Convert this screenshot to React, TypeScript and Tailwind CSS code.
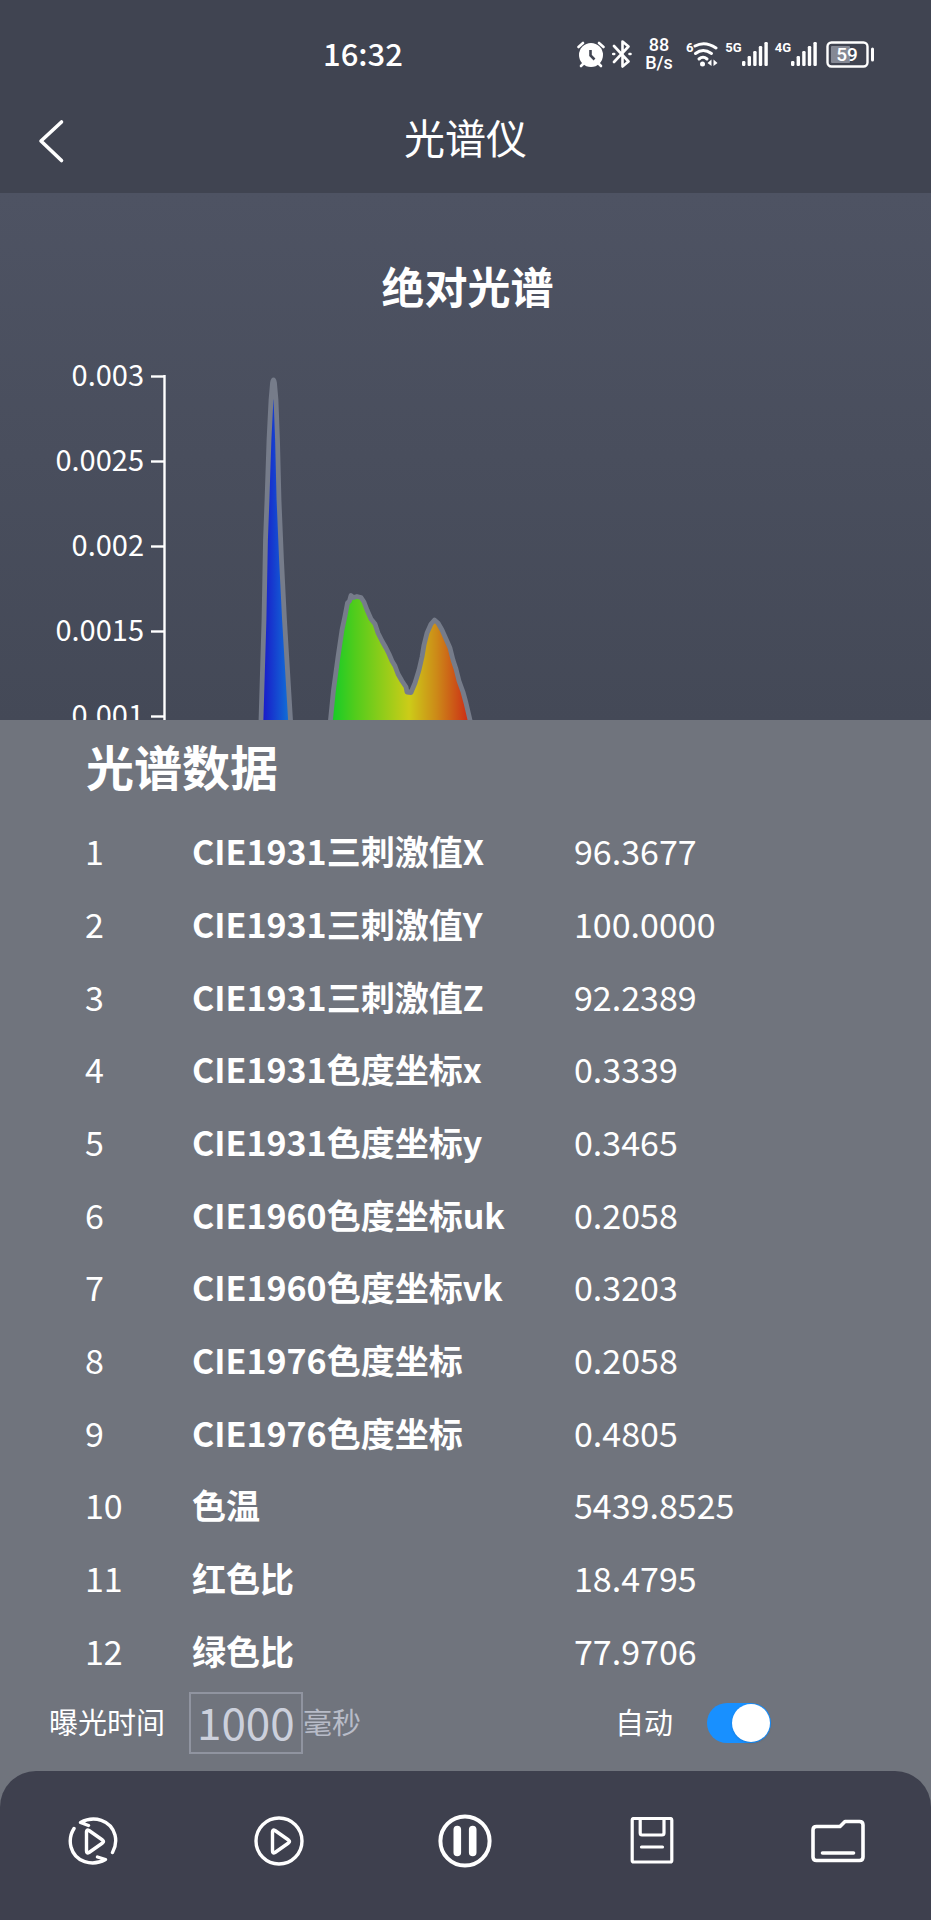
import { useState } from "react";

const rows = [
  { name: "CIE1931三刺激值X", value: "96.3677" },
  { name: "CIE1931三刺激值Y", value: "100.0000" },
  { name: "CIE1931三刺激值Z", value: "92.2389" },
  { name: "CIE1931色度坐标x", value: "0.3339" },
  { name: "CIE1931色度坐标y", value: "0.3465" },
  { name: "CIE1960色度坐标uk", value: "0.2058" },
  { name: "CIE1960色度坐标vk", value: "0.3203" },
  { name: "CIE1976色度坐标", value: "0.2058" },
  { name: "CIE1976色度坐标", value: "0.4805" },
  { name: "色温", value: "5439.8525" },
  { name: "红色比", value: "18.4795" },
  { name: "绿色比", value: "77.9706" },
];

const ticks = [
  { label: "0.003", y: 36 },
  { label: "0.0025", y: 121 },
  { label: "0.002", y: 206 },
  { label: "0.0015", y: 291 },
  { label: "0.001", y: 376 },
];

// Spectrum curve, in the chart's own units
const curve =
  "M259 420 L261 380 L264 280 L265.500 200 L267 160 L269 100 L271 60 L272.500 43 Q273.500 37 274.500 43 L276 60 L277.500 100 L279 160 L281.500 220 L284.500 280 L290.500 380 L293 420 " +
  "L327 420 L330.500 380 L333.500 350 L338 317 L342 290 L345 276 L347.500 263 L349.500 261 L351 255.500 L353.500 257.500 L357 256.500 L361 257.500 L364 262 L367 270 L371 279 L375 284 L378 293 L382 301 L386 308 L389 314 L392 321 L395 326 L398 334 L402 341 L406 347 L407 352 L411 352.500 L415 343 L419 330 L422 317 L424 305 L427 293 L431 284 L434.500 280 L438 283 L442 290 L446 299 L450 308 L453 320 L456 329 L459 341 L463 352 L466 363 L470 380 L473 420";

function Signal({ label }: { label: string }) {
  return (
    <div className="flex items-start">
      <span className="text-[13px] font-bold leading-none">{label}</span>
      <svg width="26" height="26" viewBox="0 0 26 26" fill="currentColor">
        <rect x="0" y="20" width="3.400" height="5" rx="1.200" />
        <rect x="5.600" y="15" width="3.400" height="10" rx="1.200" />
        <rect x="11.200" y="10" width="3.400" height="15" rx="1.200" />
        <rect x="16.800" y="5" width="3.400" height="20" rx="1.200" />
        <rect x="22.400" y="1" width="3.400" height="24" rx="1.200" />
      </svg>
    </div>
  );
}

function StatusBar() {
  return (
    <div className="flex h-[88px] items-center justify-between pl-[323px] pr-14 pt-5">
      <span className="pb-1 text-[31px] font-medium leading-none">16:32</span>
      <div className="flex items-center gap-[7px] font-['Roboto',sans-serif]">
        <svg width="28" height="27" viewBox="0 0 28 27" fill="none" stroke="currentColor" strokeLinecap="round">
          <circle cx="14" cy="14" r="12" fill="currentColor" stroke="none" />
          <path d="M1.500 6 L6 2 M26.500 6 L22 2" strokeWidth="2.600" />
          <path d="M4 25 L7 22 M24 25 L21 22" strokeWidth="2.600" />
          <path d="M13.500 9 V14.500 L17.500 18.500" stroke="#404451" strokeWidth="2.600" strokeLinecap="butt" />
        </svg>
        <svg width="20" height="28" viewBox="0 0 20 28" fill="none" stroke="currentColor" strokeWidth="2.600" strokeLinejoin="round" strokeLinecap="round">
          <path d="M2 6 L16.500 21.500 L10.500 26.500 V1.500 L16.500 6.500 L2 22" />
          <path d="M1.200 14 H2.200 M17.500 14 H18.500" strokeWidth="2.600" />
        </svg>
        <div className="mx-1.5 text-center text-lg font-medium leading-[18px]">
          <div>88</div>
          <div>B/s</div>
        </div>
        <div className="flex items-start">
          <span className="text-[13px] font-bold leading-none">6</span>
          <svg width="25" height="27" viewBox="0 0 25 27" fill="none" stroke="currentColor" strokeWidth="3" strokeLinecap="round">
            <path d="M2 5 Q12 -0.500 23 7" />
            <path d="M2.500 12.500 Q10 6.500 18.500 12.500" />
            <path d="M6 18 Q10 14.500 14 18" />
            <circle cx="9.500" cy="23" r="2.500" fill="currentColor" stroke="none" />
            <path d="M18.500 18.500 V25 L14.500 22 Z M20.500 18.500 V25 L24.500 22 Z" fill="currentColor" stroke="none" />
          </svg>
        </div>
        <Signal label="5G" />
        <Signal label="4G" />
        <svg className="ml-0.5" width="49" height="27" viewBox="0 0 49 27">
          <rect x="1.500" y="1.500" width="40" height="24" rx="4" fill="none" stroke="currentColor" strokeWidth="2.400" />
          <rect x="5" y="5" width="19" height="17" rx="1" fill="#858995" />
          <rect x="45" y="6.500" width="3" height="14" rx="1.500" fill="currentColor" />
          <text x="21" y="20" fontSize="19" fontWeight="500" textAnchor="middle" fill="currentColor">
            59
          </text>
        </svg>
      </div>
    </div>
  );
}

function SpectrumChart() {
  return (
    <section className="h-[527px] overflow-hidden bg-linear-to-b from-[#4e5363] to-[#444957]">
      <h2 className="pl-1 pt-[71px] text-center text-[43px] font-bold leading-none">绝对光谱</h2>
      <svg className="mt-[33px] block w-full" viewBox="0 0 931 420" role="img" aria-label="绝对光谱">
        <defs>
          <linearGradient id="spectrum" gradientUnits="userSpaceOnUse" x1="260" y1="0" x2="470" y2="0">
            <stop offset="0" stopColor="#1a10c8" />
            <stop offset="0.150" stopColor="#1078d8" />
            <stop offset="0.240" stopColor="#14c8a0" />
            <stop offset="0.340" stopColor="#14cc28" />
            <stop offset="0.450" stopColor="#50cc1c" />
            <stop offset="0.710" stopColor="#cccc18" />
            <stop offset="0.840" stopColor="#cc8a18" />
            <stop offset="1" stopColor="#cc2816" />
          </linearGradient>
        </defs>
        <path d={curve} fill="url(#spectrum)" stroke="#767c8a" strokeWidth="4.800" strokeLinejoin="round" />
        <g stroke="currentColor" strokeWidth="2.400">
          <path d="M164.500 35 V420" />
          {ticks.map((tick) => (
            <path key={tick.label} d={`M151 ${tick.y + 0.5} H164`} />
          ))}
        </g>
        <g fontSize="29" textAnchor="end" fill="currentColor">
          {ticks.map((tick) => (
            <text key={tick.label} x="144" y={tick.y + 10}>
              {tick.label}
            </text>
          ))}
        </g>
      </svg>
    </section>
  );
}

function LoopPlayIcon() {
  return (
    <svg width="50" height="50" viewBox="0 0 50 50" fill="none" stroke="currentColor" strokeWidth="3.400" strokeLinecap="round" strokeLinejoin="round">
      <path d="M20.500 9.500 L12.500 6.500 C26 -1 43 4 47 19 C48.500 25 47.500 31 44.500 36.500" />
      <path d="M29.500 41 L37.500 43.500 C24 51 7 46 3 31 C1.500 25 2.500 18 6 12.500" />
      <path d="M18.500 15.500 V35 Q18.500 38 21 36.500 L34.500 27 Q36.500 25.500 34.500 24 L21 14.500 Q18.500 13 18.500 16 Z" />
    </svg>
  );
}

function PlayIcon() {
  return (
    <svg width="50" height="50" viewBox="0 0 50 50" fill="none" stroke="currentColor" strokeWidth="3.400" strokeLinejoin="round">
      <circle cx="25" cy="25" r="23" />
      <path d="M18.500 15.500 V35 Q18.500 38 21 36.500 L34.500 27 Q36.500 25.500 34.500 24 L21 14.500 Q18.500 13 18.500 16 Z" />
    </svg>
  );
}

function PauseIcon() {
  return (
    <svg width="54" height="54" viewBox="0 0 54 54" fill="none" stroke="currentColor">
      <circle cx="27" cy="27" r="24.600" strokeWidth="4" />
      <path d="M19.300 15.500 V38.500 M34.700 15.500 V38.500" strokeWidth="7.600" strokeLinecap="round" />
    </svg>
  );
}

function SaveIcon() {
  return (
    <svg width="44" height="48" viewBox="0 0 44 48" fill="none" stroke="currentColor" strokeWidth="3.200" strokeLinecap="round" strokeLinejoin="round">
      <rect x="2.200" y="1.500" width="39.600" height="43.500" rx="1.500" />
      <path d="M10.200 2 V16 Q10.200 18 12 18 H32 Q34 18 34 16 V2" />
      <path d="M11.500 30 H32.500" />
    </svg>
  );
}

function FolderIcon() {
  return (
    <svg width="54" height="46" viewBox="0 0 54 46" fill="none" stroke="currentColor" strokeWidth="3.600" strokeLinecap="round" strokeLinejoin="round">
      <path d="M5.500 8.500 H29 L34 3.500 H48.500 Q52 3.500 52 7 V39 Q52 42.500 48.500 42.500 H5.500 Q2 42.500 2 39 V12 Q2 8.500 5.500 8.500 Z" />
      <path d="M11.500 35 H42.500" />
    </svg>
  );
}

const actions = [
  { label: "连续测量", Icon: LoopPlayIcon },
  { label: "测量", Icon: PlayIcon },
  { label: "暂停", Icon: PauseIcon },
  { label: "保存", Icon: SaveIcon },
  { label: "文件", Icon: FolderIcon },
];

export default function App() {
  const [exposure, setExposure] = useState("1000");
  const [auto, setAuto] = useState(true);

  return (
    <div className="flex min-h-screen flex-col bg-[#70747d] font-['Noto_Sans_CJK_SC',sans-serif] text-white">
      <header className="bg-[#404451]">
        <StatusBar />
        <div className="grid h-[105px] grid-cols-[1fr_auto_1fr] items-center px-9">
          <button type="button" aria-label="返回" className="justify-self-start">
            <svg width="32" height="46" viewBox="0 0 32 46" fill="none" stroke="currentColor" strokeWidth="3.600" strokeLinecap="round" strokeLinejoin="round">
              <path d="M25.500 4 L5 23 L25.500 42.500" />
            </svg>
          </button>
          <h1 className="pb-2 text-[41px] leading-none">光谱仪</h1>
        </div>
      </header>

      <SpectrumChart />

      <main className="flex grow flex-col">
        <h2 className="pl-[86px] pt-[21px] text-5xl font-bold leading-none">光谱数据</h2>
        <table className="mt-[26px] h-[872px] w-full table-fixed text-left text-[34px] leading-none">
          <colgroup>
            <col className="w-[192px]" />
            <col className="w-[382px]" />
            <col />
          </colgroup>
          <tbody>
            {rows.map((row, i) => (
              <tr key={i}>
                <td className="pl-[85px]">{i + 1}</td>
                <th scope="row" className="font-bold">{row.name}</th>
                <td>{row.value}</td>
              </tr>
            ))}
          </tbody>
        </table>

        <div className="mt-[5px] flex h-[62px] items-center pl-[49px] text-[29px] leading-none">
          <label htmlFor="exposure" className="pb-1">曝光时间</label>
          <input
            id="exposure"
            className="ml-6 h-[62px] w-[114px] border-2 border-[#9094a0] pb-1 pl-1.5 text-[44px] text-[#ccd0dc]"
            value={exposure}
            onChange={(e) => setExposure(e.target.value)}
          />
          <span className="pb-1 text-[#b8bcc8]">毫秒</span>
          <label htmlFor="auto" className="ml-auto pb-1">自动</label>
          <input
            id="auto"
            type="checkbox"
            role="switch"
            className="ml-[34px] mr-40 flex h-10 w-16 appearance-none items-center rounded-full bg-[#868a94] px-px before:size-[38px] before:rounded-full before:bg-white before:shadow checked:justify-end checked:bg-[#1890ff]"
            checked={auto}
            onChange={(e) => setAuto(e.target.checked)}
          />
        </div>
      </main>

      <nav className="mt-4 grid h-[149px] grid-cols-5 items-center rounded-t-[36px] bg-[#3e404e] pb-2.5">
        {actions.map(({ label, Icon }) => (
          <button key={label} type="button" aria-label={label} className="justify-self-center">
            <Icon />
          </button>
        ))}
      </nav>
    </div>
  );
}
